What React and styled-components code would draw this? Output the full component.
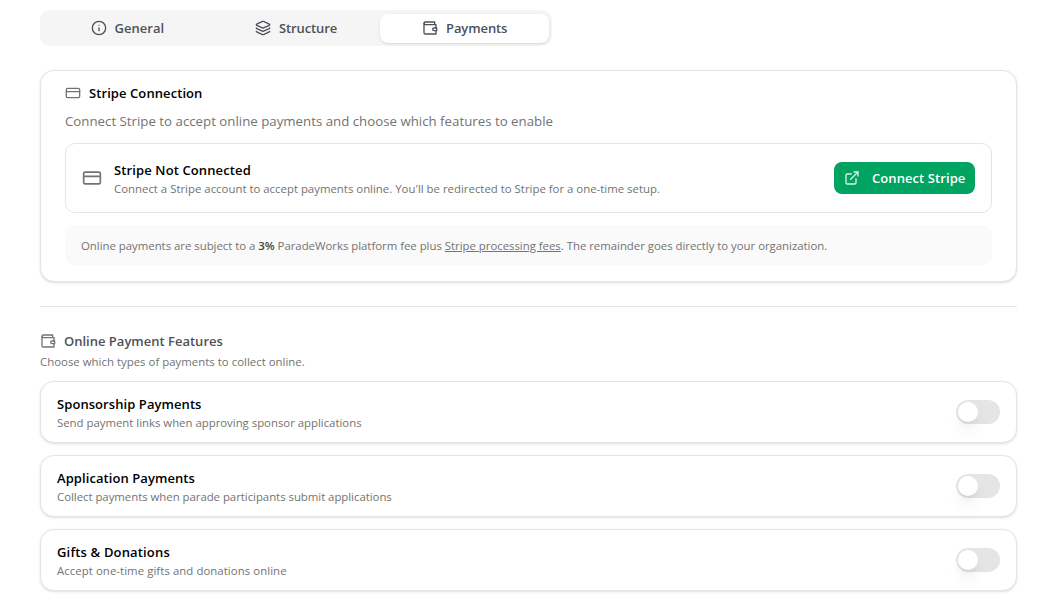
import React, { useState } from 'react';
import styled, { createGlobalStyle } from 'styled-components';
import { CreditCard, ExternalLink, Info, Layers } from 'lucide-react';

const GlobalStyle = createGlobalStyle`
  *, *::before, *::after {
    box-sizing: border-box;
  }

  body {
    margin: 0;
    background: #fff;
    color: #0a0a0a;
    font-family: 'Open Sans', 'Noto Sans', sans-serif;
    font-size: 13px;
    line-height: 20px;
  }

  button {
    border: none;
    font: inherit;
    cursor: pointer;
  }

  svg {
    flex-shrink: 0;
  }
`;

const Page = styled.main`
  min-height: 100vh;
  padding: 10px 41px 0 40px;
`;

// Tabs
const TabList = styled.div`
  display: grid;
  grid-template-columns: repeat(3, 1fr);
  align-items: center;
  width: 512px;
  height: 36px;
  padding: 3px;
  border-radius: 10px;
  background: #f5f5f5;
`;

const Tab = styled.button`
  display: flex;
  align-items: center;
  justify-content: center;
  gap: 8px;
  height: 29px;
  padding: 0;
  border-radius: 8px;
  color: #4d5158;
  font-weight: 600;
  letter-spacing: ${({ $tracking }) => $tracking || 'normal'};
  background: ${({ $active }) => ($active ? '#fff' : 'transparent')};
  box-shadow: ${({ $active }) =>
    $active ? '0 1px 3px rgba(0, 0, 0, 0.1), 0 1px 2px -1px rgba(0, 0, 0, 0.1)' : 'none'};
`;

// Cards
const Card = styled.section`
  border: 1px solid #e5e5e5;
  border-radius: 14px;
  background: #fff;
  box-shadow: 0 1px 3px rgba(0, 0, 0, 0.1), 0 1px 2px -1px rgba(0, 0, 0, 0.1);
`;

const ConnectionCard = styled(Card)`
  height: 212px;
  margin-top: 24px;
  padding: 12px 24px 0;
`;

const Heading = styled.h2`
  display: flex;
  align-items: center;
  gap: 8px;
  margin: 0;
  font-size: 13px;
  line-height: 20px;
  font-weight: 600;
  letter-spacing: ${({ $tracking }) => $tracking || 'normal'};
  color: ${({ $muted }) => ($muted ? '#4d5158' : '#000')};

  svg {
    color: #737373;
  }
`;

const Description = styled.p`
  margin: 8px 0 12px;
  color: #737373;
  font-size: 13.27px;
`;

const StatusBox = styled.div`
  display: flex;
  align-items: center;
  gap: 12px;
  height: 70px;
  padding: 0 16px;
  border: 1px solid #e5e5e5;
  border-radius: 10px;

  > svg {
    color: #737373;
  }
`;

const TextBlock = styled.div`
  flex: 1;
`;

const ItemTitle = styled.div`
  color: #000;
  font-weight: 600;
  letter-spacing: ${({ $tracking }) => $tracking || '0.07px'};
`;

const SmallText = styled.p`
  margin: 0;
  color: #737373;
  font-size: 11.4px;
  line-height: 16px;
  letter-spacing: ${({ $tracking }) => $tracking || 'normal'};
`;

const ItemText = styled(SmallText)`
  height: 16px;
  padding-top: 1px;
`;

const ConnectButton = styled.button`
  display: flex;
  align-items: center;
  gap: 12px;
  width: 141px;
  height: 32px;
  padding: 0 10px;
  border-radius: 8px;
  background: #00a35f;
  color: #fff;
  font-weight: 600;
  letter-spacing: 0.08px;
  white-space: nowrap;

  svg {
    opacity: 0.85;
  }
`;

const FeeNote = styled(SmallText)`
  height: 40px;
  margin-top: 12px;
  padding: 13px 16px 11px;
  border-radius: 10px;
  background: #fafafa;

  strong {
    color: #404040;
    font-weight: 600;
  }

  a {
    color: inherit;
    text-decoration: underline;
  }
`;

const Divider = styled.hr`
  height: 1px;
  margin: 24px 0;
  border: none;
  background: #e5e5e5;
`;

// Features
const FeatureIntro = styled.header`
  height: 50px;

  ${SmallText} {
    margin-top: 3px;
  }
`;

const FeatureList = styled.div`
  display: grid;
  gap: 12px;
`;

const FeatureCard = styled(Card)`
  display: flex;
  align-items: center;
  height: 62px;
  padding: 0 16px;
`;

const Switch = styled.button`
  display: flex;
  align-items: center;
  justify-content: ${({ $on }) => ($on ? 'flex-end' : 'flex-start')};
  width: 44px;
  height: 24px;
  padding: 2px;
  border-radius: 12px;
  background: ${({ $on }) => ($on ? '#00a35f' : '#e5e5e5')};
`;

const Thumb = styled.span`
  width: 20px;
  height: 20px;
  border-radius: 50%;
  background: #fff;
  box-shadow: 0 10px 15px -3px rgba(0, 0, 0, 0.1), 0 4px 6px -4px rgba(0, 0, 0, 0.1);
`;

const WalletIcon = () => (
  <svg
    width="16"
    height="16"
    viewBox="0 0 24 24"
    fill="none"
    stroke="currentColor"
    strokeWidth="2"
    strokeLinecap="round"
    strokeLinejoin="round"
  >
    <path d="M21 12V7H5a2 2 0 0 1 0-4h14v4" />
    <path d="M3 5v14a2 2 0 0 0 2 2h16v-5" />
    <path d="M18 12a2 2 0 0 0 0 4h4v-4Z" />
  </svg>
);

const tabs = [
  { id: 'general', label: 'General', icon: <Info size={16} /> },
  { id: 'structure', label: 'Structure', icon: <Layers size={16} />, tracking: '-0.12px' },
  { id: 'payments', label: 'Payments', icon: <WalletIcon />, tracking: '-0.1px' },
];

const features = [
  {
    id: 'sponsorship',
    title: 'Sponsorship Payments',
    text: 'Send payment links when approving sponsor applications',
    textTracking: '-0.015px',
  },
  {
    id: 'application',
    title: 'Application Payments',
    text: 'Collect payments when parade participants submit applications',
    textTracking: '-0.03px',
  },
  {
    id: 'gifts',
    title: 'Gifts & Donations',
    text: 'Accept one-time gifts and donations online',
    tracking: '0.16px',
    textTracking: '0.06px',
  },
];

export default function App() {
  const [activeTab, setActiveTab] = useState('payments');
  const [enabled, setEnabled] = useState({});

  const toggleFeature = (id) => {
    setEnabled((prev) => ({ ...prev, [id]: !prev[id] }));
  };

  return (
    <>
      <GlobalStyle />
      <Page>
        <TabList role="tablist">
          {tabs.map((tab) => (
            <Tab
              key={tab.id}
              role="tab"
              $active={tab.id === activeTab}
              $tracking={tab.tracking}
              onClick={() => setActiveTab(tab.id)}
            >
              {tab.icon}
              {tab.label}
            </Tab>
          ))}
        </TabList>

        <ConnectionCard>
          <Heading $tracking="0.08px">
            <CreditCard size={16} />
            Stripe Connection
          </Heading>
          <Description>
            Connect Stripe to accept online payments and choose which features to enable
          </Description>
          <StatusBox>
            <CreditCard size={20} />
            <TextBlock>
              <ItemTitle $tracking="0.12px">Stripe Not Connected</ItemTitle>
              <ItemText>
                Connect a Stripe account to accept payments online. You'll be redirected to Stripe for a one-time setup.
              </ItemText>
            </TextBlock>
            <ConnectButton>
              <ExternalLink size={16} />
              Connect Stripe
            </ConnectButton>
          </StatusBox>
          <FeeNote $tracking="-0.02px">
            Online payments are subject to a <strong>3%</strong> ParadeWorks platform fee plus{' '}
            <a href="#fees">Stripe processing fees</a>. The remainder goes directly to your organization.
          </FeeNote>
        </ConnectionCard>

        <Divider />

        <FeatureIntro>
          <Heading $muted>
            <WalletIcon />
            Online Payment Features
          </Heading>
          <SmallText $tracking="0.015px">Choose which types of payments to collect online.</SmallText>
        </FeatureIntro>
        <FeatureList>
          {features.map((feature) => (
            <FeatureCard key={feature.id}>
              <TextBlock>
                <ItemTitle $tracking={feature.tracking}>{feature.title}</ItemTitle>
                <ItemText $tracking={feature.textTracking}>{feature.text}</ItemText>
              </TextBlock>
              <Switch
                role="switch"
                aria-label={feature.title}
                aria-checked={!!enabled[feature.id]}
                $on={enabled[feature.id]}
                onClick={() => toggleFeature(feature.id)}
              >
                <Thumb />
              </Switch>
            </FeatureCard>
          ))}
        </FeatureList>
      </Page>
    </>
  );
}
